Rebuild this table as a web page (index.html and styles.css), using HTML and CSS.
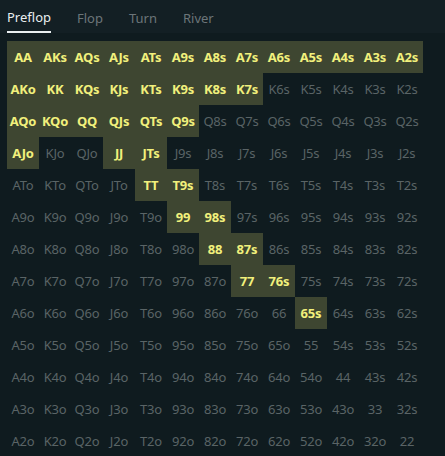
FILE: index.html
```html
<!DOCTYPE html>
<html>
<head>
<meta charset="utf-8">
<link rel="stylesheet" href="styles.css">
</head>
<body>
<div class="tabs">
  <div class="tab active">Preflop</div>
  <div class="tab">Flop</div>
  <div class="tab">Turn</div>
  <div class="tab">River</div>
</div>
<div class="grid" id="grid"></div>
<script src="app.js"></script>
</body>
</html>
```
FILE: styles.css
```css
html, body {
  margin: 0;
  padding: 0;
  background: #0f1b1f;
  width: 445px;
  height: 456px;
  overflow: hidden;
  font-family: "Noto Sans", "Open Sans", sans-serif;
}
.tabs {
  display: flex;
  height: 33px;
  background: #131f24;
  padding-left: 7px;
  box-sizing: border-box;
}
.tab {
  font-size: 13px;
  color: #6c7579;
  height: 33px;
  padding-top: 4px;
  line-height: 29px;
  box-sizing: border-box;
  margin-right: 26px;
}
.tab.active {
  color: #e9eef0;
  border-bottom: 2px solid #e9eef0;
  line-height: 27px;
}
.grid {
  display: grid;
  grid-template-columns: repeat(13, 32px);
  grid-auto-rows: 32px;
  margin: 8px 0 0 7px;
}
.cell {
  display: flex;
  align-items: center;
  justify-content: center;
  font-size: 13px;
  color: #5a6466;
  letter-spacing: -0.2px;
}
.cell.on {
  background: #3e4631;
  color: #f1f07c;
  font-weight: bold;
}
```
FILE: app.js
```js
var r = ['A','K','Q','J','T','9','8','7','6','5','4','3','2'];
var on = {'AA':1,'AKs':1,'AQs':1,'AJs':1,'ATs':1,'A9s':1,'A8s':1,'A7s':1,'A6s':1,'A5s':1,'A4s':1,'A3s':1,'A2s':1,
'AKo':1,'KK':1,'KQs':1,'KJs':1,'KTs':1,'K9s':1,'K8s':1,'K7s':1,
'AQo':1,'KQo':1,'QQ':1,'QJs':1,'QTs':1,'Q9s':1,
'AJo':1,'JJ':1,'JTs':1,'TT':1,'T9s':1,'99':1,'98s':1,'88':1,'87s':1,'77':1,'76s':1,'65s':1};
var g = document.getElementById('grid');
for (var i = 0; i < 13; i++) {
  for (var j = 0; j < 13; j++) {
    var t;
    if (i === j) t = r[i] + r[j];
    else if (j > i) t = r[i] + r[j] + 's';
    else t = r[j] + r[i] + 'o';
    var d = document.createElement('div');
    d.className = 'cell' + (on[t] ? ' on' : '');
    d.textContent = t;
    g.appendChild(d);
  }
}
```
